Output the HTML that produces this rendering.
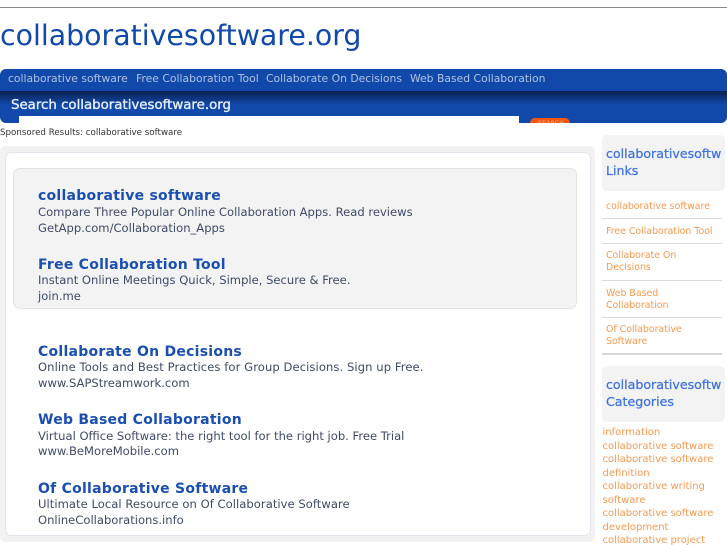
<!DOCTYPE html>
<html><head><meta charset="utf-8"><style>
html,body{margin:0;padding:0;background:#fff;width:727px;height:545px;overflow:hidden;position:relative;font-family:"DejaVu Sans",sans-serif}
div{position:absolute;white-space:nowrap;box-sizing:border-box}
.h{font-weight:bold;font-size:14px;color:#1a4fb0;left:38px;letter-spacing:.25px;line-height:17px}
.t{font-size:11.57px;color:#3e4a68;left:38px;line-height:15px}
.n{font-size:10.8px;color:#b0c2e2;top:72px;line-height:14px}
.s{font-size:9.4px;color:#f79a50;left:606px;line-height:12px}
.l{left:602px;width:120px;height:1px;background:#d8d8d8}
.c{font-size:10px;color:#f79a50;left:602.5px}
.b{font-size:12.6px;color:#3d72e0;left:606px;line-height:17px;-webkit-text-stroke:.25px #3d72e0}
</style></head><body>
<div style="left:0;top:7px;width:727px;height:1px;background:#888"></div>
<div style="left:0;top:17px;font-size:28.4px;color:#1149ab;line-height:38px">collaborativesoftware.org</div>
<div style="left:0;top:69px;width:727px;height:54px;background:#1149ab;border-radius:6px"></div>
<div style="left:0;top:91px;width:727px;height:14px;background:linear-gradient(#0b2050,#1149ab)"></div>
<div class="n" style="left:8px">collaborative software</div>
<div class="n" style="left:136px">Free Collaboration Tool</div>
<div class="n" style="left:266px">Collaborate On Decisions</div>
<div class="n" style="left:410px">Web Based Collaboration</div>
<div style="left:11px;top:97px;font-size:13.35px;color:#e8eef8;line-height:17px;-webkit-text-stroke:.35px #e8eef8">Search collaborativesoftware.org</div>
<div style="left:19px;top:116px;width:500px;height:7px;background:#fff"></div>
<div style="left:530px;top:118px;width:40px;height:5px;background:#f4560e;border-radius:7px 7px 0 0;overflow:hidden"><div style="left:8px;top:2px;font-size:6px;line-height:7px;color:#f8b090;letter-spacing:.3px">SEARCH</div></div>
<div style="left:0;top:128px;font-size:8.7px;color:#333;line-height:11px">Sponsored Results: collaborative software</div>

<div style="left:0;top:146px;width:595px;height:396px;background:#f2f2f2;border-radius:6px"></div>
<div style="left:5px;top:152px;width:586px;height:384px;background:#fff;border:1px solid #e4e4ec;border-radius:6px"></div>
<div style="left:13px;top:168px;width:564px;height:141px;background:#f3f3f3;border:1px solid #e4e4e4;border-radius:7px"></div>

<div class="h" style="top:188px">collaborative software</div>
<div class="t" style="top:205px">Compare Three Popular Online Collaboration Apps. Read reviews</div>
<div class="t" style="top:221px">GetApp.com/Collaboration_Apps</div>
<div class="h" style="top:257px">Free Collaboration Tool</div>
<div class="t" style="top:273px">Instant Online Meetings Quick, Simple, Secure &amp; Free.</div>
<div class="t" style="top:289px">join.me</div>
<div class="h" style="top:344px">Collaborate On Decisions</div>
<div class="t" style="top:360px;letter-spacing:.08px">Online Tools and Best Practices for Group Decisions. Sign up Free.</div>
<div class="t" style="top:376px">www.SAPStreamwork.com</div>
<div class="h" style="top:412px">Web Based Collaboration</div>
<div class="t" style="top:429px">Virtual Office Software: the right tool for the right job. Free Trial</div>
<div class="t" style="top:444px">www.BeMoreMobile.com</div>
<div class="h" style="top:481px">Of Collaborative Software</div>
<div class="t" style="top:497px;letter-spacing:.04px">Ultimate Local Resource on Of Collaborative Software</div>
<div class="t" style="top:513px">OnlineCollaborations.info</div>

<div style="left:602px;top:135px;width:123px;height:56px;background:#f3f3f3;border-radius:5px"></div>
<div class="b" style="top:145px;width:115px;overflow:hidden">collaborativesoftware.org<br>Links</div>
<div class="s" style="top:201px">collaborative software</div>
<div class="l" style="top:218px"></div>
<div class="s" style="top:226px">Free Collaboration Tool</div>
<div class="l" style="top:243px"></div>
<div class="s" style="top:250px">Collaborate On<br>Decisions</div>
<div class="l" style="top:280px"></div>
<div class="s" style="top:288px">Web Based<br>Collaboration</div>
<div class="l" style="top:317px"></div>
<div class="s" style="top:324px">Of Collaborative<br>Software</div>
<div class="l" style="top:353px;height:2px"></div>
<div style="left:602px;top:366px;width:123px;height:56px;background:#f3f3f3;border-radius:5px"></div>
<div class="b" style="top:376px;width:115px;overflow:hidden">collaborativesoftware.org<br>Categories</div>
<div class="c" style="top:426px;line-height:13.5px">information<br>collaborative software<br>collaborative software<br>definition<br>collaborative writing<br>software<br>collaborative software<br>development<br>collaborative project</div>
</body></html>
